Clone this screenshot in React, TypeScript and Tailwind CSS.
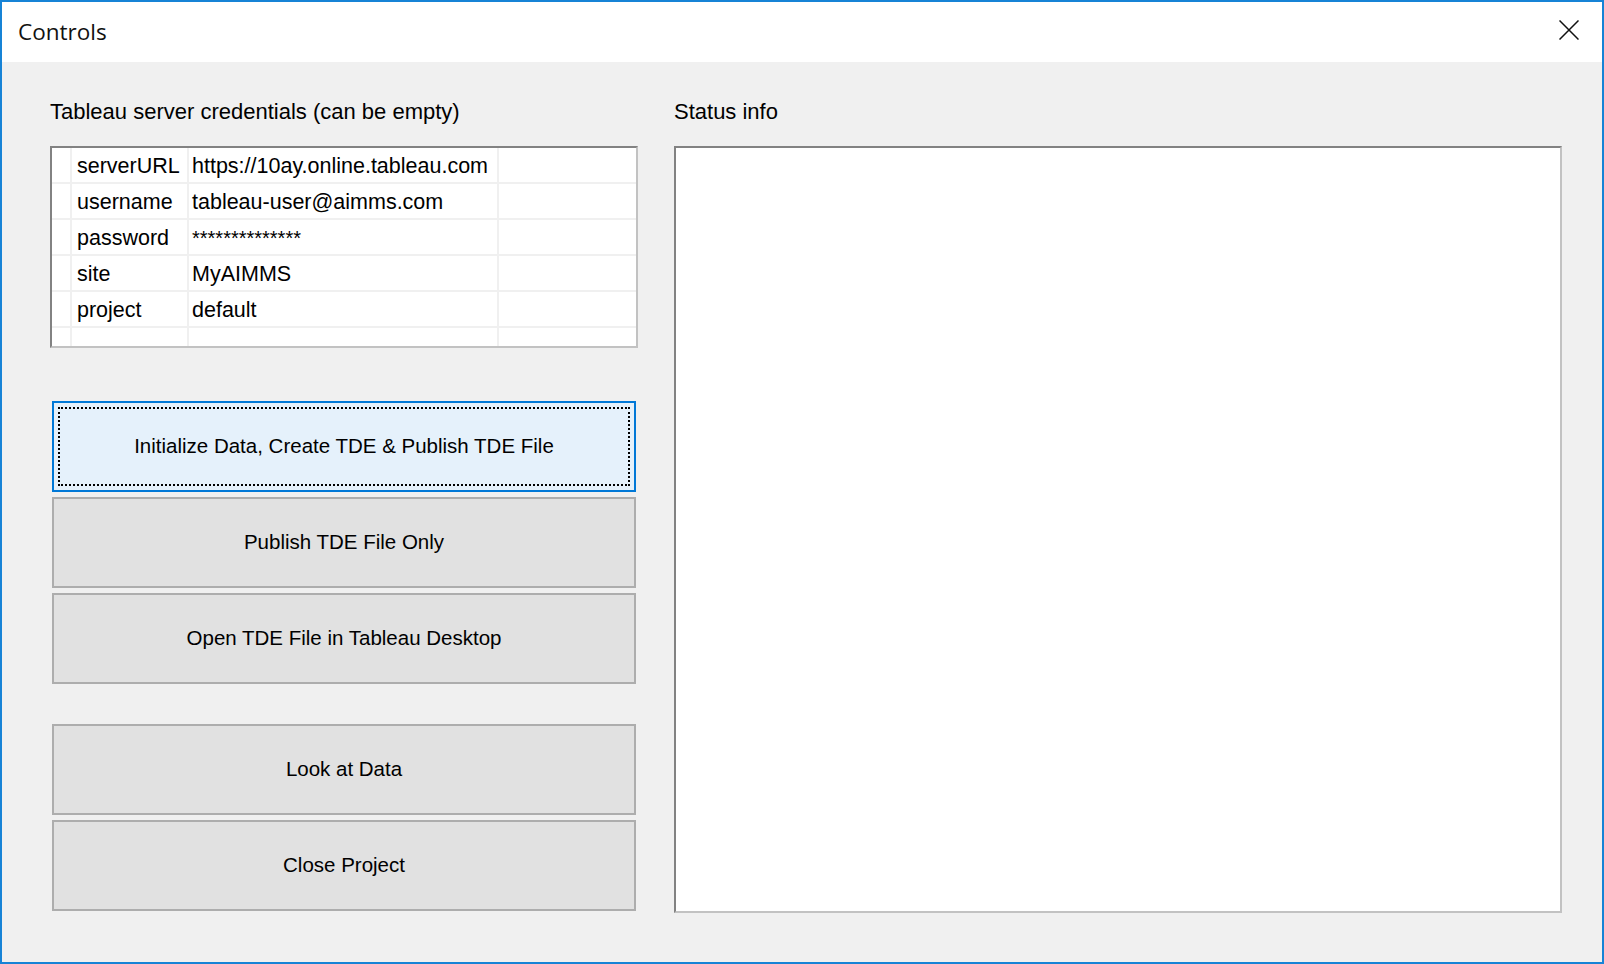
import React from 'react';

const font = { fontFamily: '"Liberation Sans", Arial, sans-serif' };

const rows: [string, string][] = [
  ['serverURL', 'https://10ay.online.tableau.com'],
  ['username', 'tableau-user@aimms.com'],
  ['password', '**************'],
  ['site', 'MyAIMMS'],
  ['project', 'default'],
];

const CredGrid = () => (
  <div className="mt-[22px] h-[202px] bg-white border-2 border-t-[#828282] border-l-[#828282] border-r-[#c2c2c2] border-b-[#c2c2c2] flex flex-col text-[21.5px]">
    {rows.map(([k, v]) => (
      <div key={k} className="h-[36px] flex border-b-2 border-[#f0f0f0] shrink-0">
        <div className="w-[20px] border-r-2 border-[#f0f0f0]" />
        <div className="w-[117px] border-r-2 border-[#f0f0f0] pl-[5px] pt-[2px] leading-[32px] whitespace-nowrap overflow-hidden">{k}</div>
        <div className={`w-[310px] border-r-2 border-[#f0f0f0] pl-[3px] pt-[2px] leading-[32px] whitespace-nowrap overflow-hidden ${k === 'password' ? 'text-[20px]' : ''}`}>{v}</div>
        <div className="flex-1" />
      </div>
    ))}
    <div className="flex-1 flex">
      <div className="w-[20px] border-r-2 border-[#f0f0f0]" />
      <div className="w-[117px] border-r-2 border-[#f0f0f0]" />
      <div className="w-[310px] border-r-2 border-[#f0f0f0]" />
      <div className="flex-1" />
    </div>
  </div>
);

const Btn: React.FC<{ label: string; className?: string }> = ({ label, className = '' }) => (
  <div className={`h-[91px] w-full border-2 border-[#adadad] bg-[#e1e1e1] flex items-center justify-center text-black ${className}`}>
    {label}
  </div>
);

export default function App() {
  return (
    <div className="w-[1604px] h-[964px] border-2 border-[#1783d6] flex flex-col bg-[#f0f0f0] text-[22px] text-black" style={font}>
      <div className="h-[60px] bg-white flex items-center justify-between pl-[16px] pr-[23px] shrink-0">
        <span className="text-[22.5px] text-[#111]" style={{ fontFamily: '"Segoe UI", "Open Sans", sans-serif' }}>Controls</span>
        <svg width="20" height="20" viewBox="0 0 20 20" className="mb-[4px]">
          <path d="M0.5 0.5 L19.5 19.5 M19.5 0.5 L0.5 19.5" stroke="#111" strokeWidth="1.5" fill="none" />
        </svg>
      </div>
      <div className="flex-1 flex pt-[38px] pl-[48px] gap-[36px]">
        <div className="w-[588px] flex flex-col">
          <div className="h-[24px] leading-[24px] whitespace-nowrap">Tableau server credentials (can be empty)</div>
          <CredGrid />
          <div className="mt-[53px] w-[586px] pl-[2px] flex flex-col gap-[5px] text-[20.5px]">
            <div className="h-[91px] w-full border-2 border-[#0078d7] bg-[#e5f1fb] p-[4px] flex">
              <div className="flex-1 border-2 border-dotted border-black flex items-center justify-center">
                Initialize Data, Create TDE &amp; Publish TDE File
              </div>
            </div>
            <Btn label="Publish TDE File Only" />
            <Btn label="Open TDE File in Tableau Desktop" />
            <Btn label="Look at Data" className="mt-[35px]" />
            <Btn label="Close Project" />
          </div>
        </div>
        <div className="w-[888px] flex flex-col">
          <div className="h-[24px] leading-[24px] whitespace-nowrap">Status info</div>
          <div className="mt-[22px] h-[767px] bg-white border-2 border-t-[#828282] border-l-[#828282] border-r-[#c2c2c2] border-b-[#c2c2c2]" />
        </div>
      </div>
    </div>
  );
}
